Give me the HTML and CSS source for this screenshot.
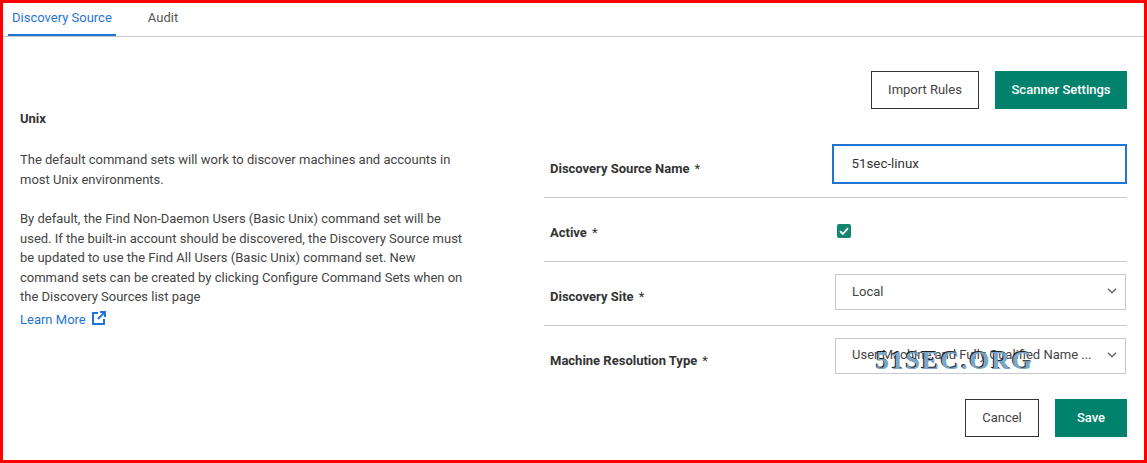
FILE: index.html
```html
<!DOCTYPE html>
<html lang="en">
<head>
<meta charset="utf-8">
<title>Discovery Source</title>
<link rel="stylesheet" href="styles.css">
</head>
<body>
<div class="frame">
  <nav class="tabs">
    <a class="tab tab-active">Discovery Source</a>
    <a class="tab">Audit</a>
  </nav>
  <div class="actions">
    <button class="btn btn-outline btn-import">Import Rules</button>
    <button class="btn btn-primary btn-scanner">Scanner Settings</button>
  </div>
  <main class="content">
    <section class="info">
      <h2 class="info-title">Unix</h2>
      <p class="info-text">The default command sets will work to discover machines and accounts in most Unix environments.</p>
      <p class="info-text">By default, the Find Non-Daemon Users (Basic Unix) command set will be used. If the built-in account should be discovered, the Discovery Source must be updated to use the Find All Users (Basic Unix) command set. New command sets can be created by clicking Configure Command Sets when on the Discovery Sources list page</p>
      <a class="learn">Learn More
        <svg class="learn-icon" width="14" height="14" viewBox="0 0 14 14" fill="none" stroke="#1f74d4" stroke-width="2">
          <path d="M6 2H1v11h11V8"/>
          <path d="M8 1h5v5"/>
          <path d="M12.6 1.4 6 8"/>
        </svg>
      </a>
    </section>
    <form class="form">
      <div class="row row-name">
        <label class="label">Discovery Source Name<span class="req">*</span></label>
        <div class="input">51sec-linux</div>
      </div>
      <div class="row">
        <label class="label">Active<span class="req">*</span></label>
        <span class="check">
          <svg width="14" height="14" viewBox="0 0 14 14" fill="none" stroke="#fff" stroke-width="1.8"><path d="M3 7.2 5.8 10 11 4.2"/></svg>
        </span>
      </div>
      <div class="row">
        <label class="label">Discovery Site<span class="req">*</span></label>
        <div class="select"><span class="select-text">Local</span>
          <svg class="chev" width="10" height="6" viewBox="0 0 10 6" fill="none" stroke="#666" stroke-width="1.4"><path d="M1 .8 5 4.8 9 .8"/></svg>
        </div>
      </div>
      <div class="row row-last">
        <label class="label">Machine Resolution Type<span class="req">*</span></label>
        <div class="select"><span class="select-text">User Machine and Fully Qualified Name ...</span>
          <svg class="chev" width="10" height="6" viewBox="0 0 10 6" fill="none" stroke="#666" stroke-width="1.4"><path d="M1 .8 5 4.8 9 .8"/></svg>
        </div>
        <span class="watermark">51SEC.ORG</span>
      </div>
      <div class="form-actions">
        <button type="button" class="btn btn-outline btn-cancel">Cancel</button>
        <button type="button" class="btn btn-primary btn-save">Save</button>
      </div>
    </form>
  </main>
</div>
</body>
</html>
```
FILE: styles.css
```css
* { box-sizing: border-box; }
html, body { margin: 0; height: 100%; }
body { font-family: Roboto, "Liberation Sans", sans-serif; font-size: 13px; color: #333; background: #fff; }
.frame { width: 1147px; height: 463px; border: 3px solid #f00; overflow: hidden; }
.tabs { display: flex; height: 34px; border-bottom: 1px solid #c8c8c8; padding-left: 5px; }
.tab { height: 33px; padding: 7px 4px 0; line-height: 16px; color: #555; margin-right: 28px; }
.tab-active { color: #1f74d4; border-bottom: 2px solid #1f74d4; }
.actions { display: flex; justify-content: flex-end; gap: 16px; padding: 34px 17px 0 0; }
.btn { height: 38px; font: inherit; cursor: pointer; padding: 0 0 2px; border-radius: 0; }
.btn-outline { background: #fff; border: 1px solid #333; color: #444; }
.btn-primary { background: #00826d; border: 0; color: #fff; font-weight: 500; }
.btn-import { width: 108px; }
.btn-scanner { width: 132px; }
.btn-cancel { width: 74px; }
.btn-save { width: 72px; }
.content { display: flex; }
.info { width: 541px; padding: 0 0 0 17px; }
.info-title { font-size: 13px; font-weight: 700; margin: 2px 0 0; line-height: 16px; color: #333; }
.info-text { width: 446px; margin: 23px 0 0; line-height: 19.5px; color: #444; }
.info-text + .info-text { margin-top: 20px; }
.learn { display: flex; align-items: center; gap: 5px; margin-top: 3px; color: #1f74d4; line-height: 20px; }
.learn-icon { margin: -3px 0 0 1px; }
.form { width: 583px; margin-top: 35px; }
.row { position: relative; display: flex; align-items: center; height: 64px; border-bottom: 1px solid #c8c8c8; }
.row-name { height: 54px; }
.row-last { border-bottom: 0; }
.label { width: 285px; padding: 6px 0 0 6px; font-weight: 700; color: #333; }
.row-name .label { margin-top: -10px; }
.row-last .label { padding-top: 4px; }
.req { margin-left: 5px; font-weight: 400; }
.input { width: 295px; height: 40px; margin: -13px 0 0 4px; padding: 0 17px; line-height: 36px; font-size: 13.33px; border: 2px solid #1f74d4; color: #333; }
.check { display: flex; width: 14px; height: 14px; margin-left: 8px; margin-top: 2px; background: #14856f; border-radius: 2px; }
.select { display: flex; align-items: center; justify-content: space-between; width: 291px; height: 36px; margin: -3px 0 0 6px; padding: 0 8px 2px 16px; border: 1px solid #c8c8c8; color: #444; }
.row-last .select { margin-top: -5px; }
.watermark { position: absolute; left: 332px; top: 20px; font: 700 26px "Liberation Serif", serif; letter-spacing: 1.7px; color: #7ba6c8; text-shadow: -1px -1px 0 #222; }
.form-actions { display: flex; justify-content: flex-end; gap: 16px; padding-top: 9px; }
```
